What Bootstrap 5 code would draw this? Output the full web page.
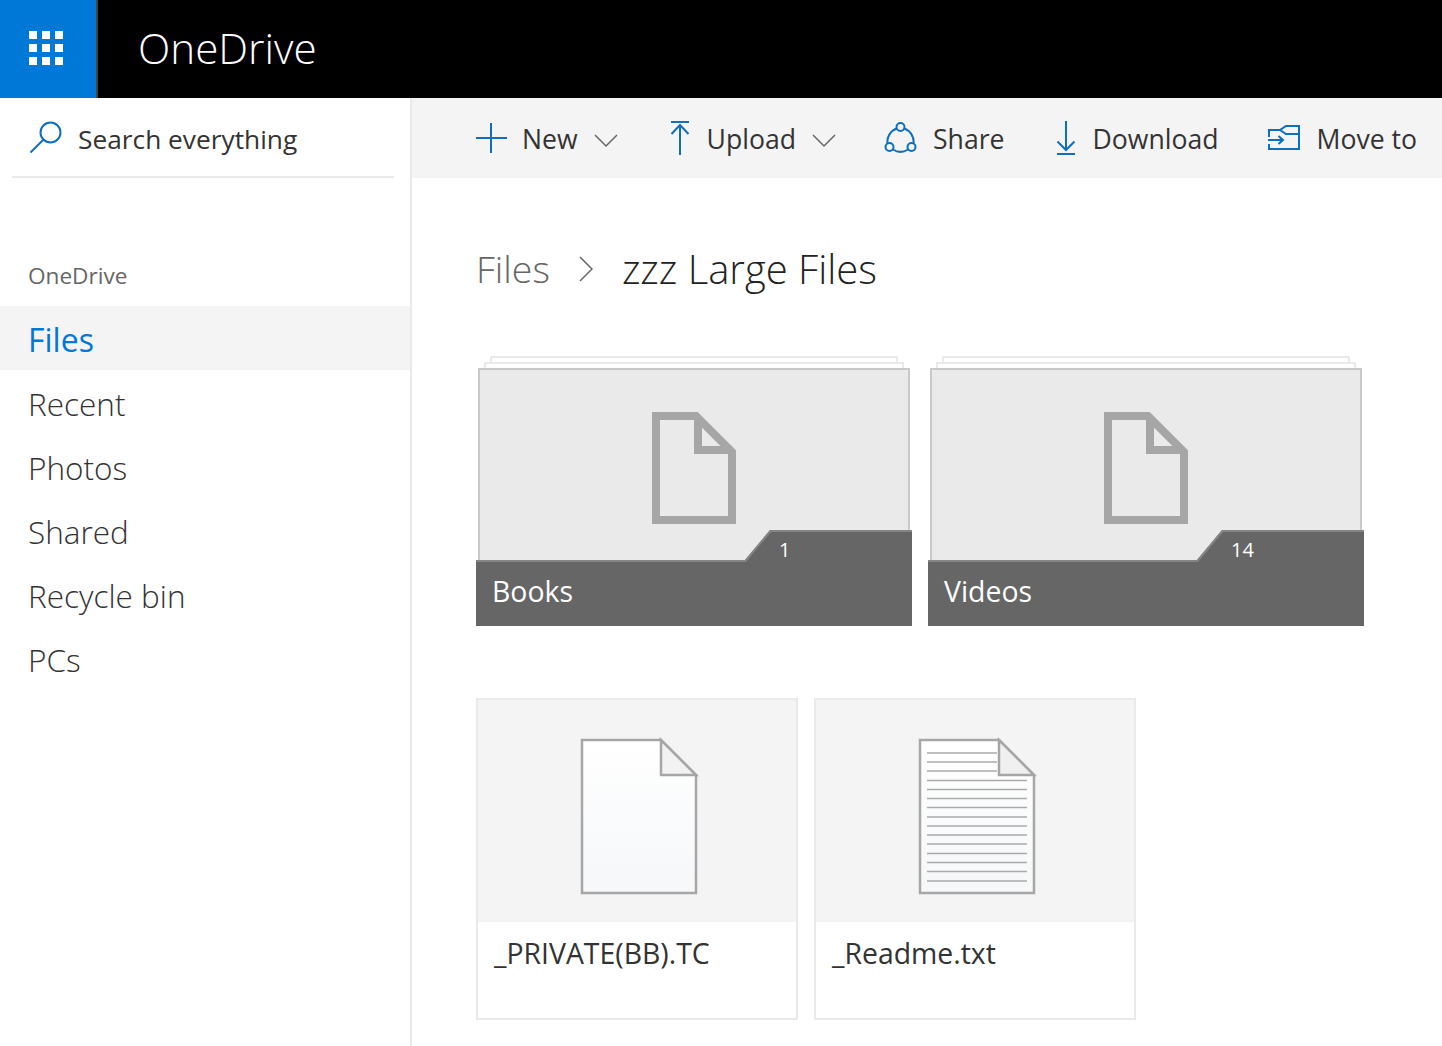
<!DOCTYPE html>
<html lang="en">
<head>
<meta charset="utf-8">
<title>OneDrive</title>
<link href="https://cdn.jsdelivr.net/npm/bootstrap@5.3.0/dist/css/bootstrap.min.css" rel="stylesheet">
<style>
html,body{height:100%;overflow:hidden}
body{font-family:"Open Sans","Liberation Sans",sans-serif;color:#333;background:#fff}
.od-shell{height:1046px;width:1442px}
.od-top{height:98px;background:#000}
.od-waffle{width:98px;height:98px;background:#0078d7;border-right:2px solid #444}
.od-waffle svg{margin:0 4px 2px 0}
.od-brand{font-size:42.2px;font-weight:300;color:#fff;margin-left:40px;line-height:96px}
.od-body{height:948px}
.od-side{width:412px;border-right:2px solid #eaeaea}
.od-search{margin:0 16px 0 12px;height:80px;border-bottom:2px solid #eaeaea;padding-left:17px;gap:15px;font-size:26.3px;color:#333}
.od-search span{margin-top:6px}
.od-label{font-size:22.6px;color:#666;margin:83px 0 15px 28px;line-height:30px}
.od-nav .nav-link{height:64px;padding:0 0 0 28px;font-size:31.5px;font-weight:300;color:#333;line-height:67px}
.od-nav .nav-link.active{background:#f4f4f4;color:#0078d7;font-weight:400;font-size:32px}
.od-tools{height:80px;background:#f4f4f4;padding-left:64px;gap:50px;font-size:26.6px;color:#333;white-space:nowrap;overflow:hidden}
.od-tool{gap:16px}
.od-tool svg{flex:none}
.od-tool span{margin-top:3px}
.od-first span{margin-left:-1px}
.od-chev{margin:6px 0 0 0}
.od-up span{margin-left:1px}
.od-share{margin-left:-2px}
.od-move{margin-left:-1px}
.od-crumb{margin:63px 0 0 64px;height:56px;line-height:56px;gap:29px;color:#666;font-weight:300;font-size:37.5px}
.od-crumb strong{font-weight:300;color:#222;font-size:40px}
.od-folders{margin:59px 0 0 64px;gap:16px}
.od-folder{width:436px;height:270px;position:relative}
.od-folder svg.od-art{position:absolute;left:0;top:0}
.od-fname{position:absolute;left:16px;top:217px;font-size:28.4px;color:#fff;line-height:36px}
.od-count{position:absolute;top:182px;font-size:20px;color:#fff;line-height:24px}
.od-files{margin:72px 0 0 64px;gap:16px}
.od-file{width:322px;height:322px;border:2px solid #eaeaea;background:#fff}
.od-prev{height:222px;background:#f4f4f4;margin:0}
.od-fn{font-size:28.4px;line-height:36px;padding:13px 0 0 16px;color:#333}
</style>
</head>
<body>
<div class="od-shell d-flex flex-column">
  <header class="od-top d-flex align-items-start">
    <div class="od-waffle d-flex align-items-center justify-content-center">
      <svg width="36" height="36" viewBox="0 0 36 36" fill="#fff"><rect x="1" y="1" width="8" height="8"/><rect x="14" y="1" width="8" height="8"/><rect x="27" y="1" width="8" height="8"/><rect x="1" y="14" width="8" height="8"/><rect x="14" y="14" width="8" height="8"/><rect x="27" y="14" width="8" height="8"/><rect x="1" y="27" width="8" height="8"/><rect x="14" y="27" width="8" height="8"/><rect x="27" y="27" width="8" height="8"/></svg>
    </div>
    <div class="od-brand">OneDrive</div>
  </header>
  <div class="od-body d-flex">
    <aside class="od-side flex-shrink-0">
      <div class="od-search d-flex align-items-center">
        <svg width="34" height="34" viewBox="0 0 34 34" fill="none" stroke="#106ebe" stroke-width="2"><circle cx="21.500" cy="12.500" r="10"/><path d="M14.500 19.500 1.500 32.500"/></svg>
        <span>Search everything</span>
      </div>
      <div class="od-label">OneDrive</div>
      <nav class="nav flex-column od-nav">
        <a class="nav-link active" href="#">Files</a>
        <a class="nav-link" href="#">Recent</a>
        <a class="nav-link" href="#">Photos</a>
        <a class="nav-link" href="#">Shared</a>
        <a class="nav-link" href="#">Recycle bin</a>
        <a class="nav-link" href="#">PCs</a>
      </nav>
    </aside>
    <main class="flex-grow-1 overflow-hidden">
      <div class="od-tools d-flex align-items-center">
        <div class="od-tool od-first d-flex align-items-center">
          <svg width="31" height="30" viewBox="0 0 31 30" fill="none" stroke="#106ebe" stroke-width="2"><path d="M0 15H31M15 0V30"/></svg>
          <span>New</span>
          <svg class="od-chev" width="24" height="14" viewBox="0 0 24 14" fill="none" stroke="#666" stroke-width="1.500"><path d="M1 1 12 12 23 1"/></svg>
        </div>
        <div class="od-tool od-up d-flex align-items-center">
          <svg width="22" height="34" viewBox="0 0 22 34" fill="none" stroke="#106ebe" stroke-width="2"><path d="M3 1H21M12 34V4M3.500 13 12 4 20.500 13"/></svg>
          <span>Upload</span>
          <svg class="od-chev" width="24" height="14" viewBox="0 0 24 14" fill="none" stroke="#666" stroke-width="1.500"><path d="M1 1 12 12 23 1"/></svg>
        </div>
        <div class="od-tool d-flex align-items-center">
          <svg class="od-share" width="33" height="34" viewBox="0 0 33 34" fill="none" stroke="#106ebe" stroke-width="2"><circle cx="16.500" cy="6" r="4"/><circle cx="5.500" cy="26" r="4"/><circle cx="27.500" cy="26" r="4"/><path d="M3.500 22.500A14 14 0 0 1 12.800 7.500M29.500 22.500A14 14 0 0 0 20.200 7.500M9 28.500A14 14 0 0 0 24 28.500"/></svg>
          <span>Share</span>
        </div>
        <div class="od-tool d-flex align-items-center">
          <svg width="22" height="34" viewBox="0 0 22 34" fill="none" stroke="#106ebe" stroke-width="2"><path d="M3 33H21M12 0V29M3.500 20.500 12 29 20.500 20.500"/></svg>
          <span>Download</span>
        </div>
        <div class="od-tool d-flex align-items-center">
          <svg class="od-move" width="33" height="25" viewBox="0 0 33 25" fill="none" stroke="#106ebe" stroke-width="2"><path d="M2 12V5H13L19 1H32V24H2V19M19 1 13 5 19 9H32M1 15H16M11.500 11 16 15 11.500 19"/></svg>
          <span>Move to</span>
        </div>
      </div>
      <div class="od-crumb d-flex align-items-center">
        <span>Files</span>
        <svg width="14" height="26" viewBox="0 0 14 26" fill="none" stroke="#666" stroke-width="1.500"><path d="M1 1 13 13 1 25"/></svg>
        <strong>zzz Large Files</strong>
      </div>
      <div class="od-folders d-flex">
        <div class="od-folder">
          <svg class="od-art" width="436" height="270" viewBox="0 0 436 270">
            <rect x="15" y="1" width="406" height="20" fill="#fff" stroke="#eaeaea" stroke-width="2"/>
            <rect x="9" y="7" width="418" height="20" fill="#fff" stroke="#eaeaea" stroke-width="2"/>
            <rect x="3" y="13" width="430" height="230" fill="#eaeaea" stroke="#c8c8c8" stroke-width="2"/>
            <path d="M180 60H220L256 96V164H180Z" fill="none" stroke="#a6a6a6" stroke-width="8"/>
            <path d="M222 60V94H256" fill="none" stroke="#a6a6a6" stroke-width="8"/>
            <path d="M0 204H269L294 174H436V270H0Z" fill="#666"/>
            <path d="M0 205H269.500L294.500 175H436" fill="none" stroke="#858585" stroke-width="2"/>
          </svg>
          <div class="od-count" style="left:303px">1</div>
          <div class="od-fname">Books</div>
        </div>
        <div class="od-folder">
          <svg class="od-art" width="436" height="270" viewBox="0 0 436 270">
            <rect x="15" y="1" width="406" height="20" fill="#fff" stroke="#eaeaea" stroke-width="2"/>
            <rect x="9" y="7" width="418" height="20" fill="#fff" stroke="#eaeaea" stroke-width="2"/>
            <rect x="3" y="13" width="430" height="230" fill="#eaeaea" stroke="#c8c8c8" stroke-width="2"/>
            <path d="M180 60H220L256 96V164H180Z" fill="none" stroke="#a6a6a6" stroke-width="8"/>
            <path d="M222 60V94H256" fill="none" stroke="#a6a6a6" stroke-width="8"/>
            <path d="M0 204H269L294 174H436V270H0Z" fill="#666"/>
            <path d="M0 205H269.500L294.500 175H436" fill="none" stroke="#858585" stroke-width="2"/>
          </svg>
          <div class="od-count" style="left:303px">14</div>
          <div class="od-fname">Videos</div>
        </div>
      </div>
      <div class="od-files d-flex">
        <div class="od-file">
          <div class="od-prev">
            <svg width="318" height="222" viewBox="0 0 318 222" class="d-block">
              <defs><linearGradient id="odpage" x1="0" y1="0" x2="0" y2="1"><stop offset="0" stop-color="#fff"/><stop offset="1" stop-color="#f5f7f9"/></linearGradient></defs>
              <path d="M104 40H183L218 75V193H104Z" fill="url(#odpage)" stroke="#a6a6a6" stroke-width="2.500"/>
              <path d="M183 40V75H218Z" fill="#f2f2f2" stroke="#a6a6a6" stroke-width="2.500"/>
            </svg>
          </div>
          <div class="od-fn">_PRIVATE(BB).TC</div>
        </div>
        <div class="od-file">
          <div class="od-prev">
            <svg width="318" height="222" viewBox="0 0 318 222" class="d-block">
              <path d="M104 40H183L218 75V193H104Z" fill="url(#odpage)" stroke="#a6a6a6" stroke-width="2.500"/>
              <path d="M111 53H181M111 62H181M111 71H181M111 80.500H211M111 89.500H211M111 98.500H211M111 107.500H211M111 117H211M111 126H211M111 135H211M111 144H211M111 153.500H211M111 162.500H211M111 171.500H211M111 181H211" stroke="#aaa" stroke-width="1.500"/>
              <path d="M183 40V75H218Z" fill="#f0f0f0" stroke="#a6a6a6" stroke-width="2.500"/>
            </svg>
          </div>
          <div class="od-fn">_Readme.txt</div>
        </div>
      </div>
    </main>
  </div>
</div>
<script src="https://cdn.jsdelivr.net/npm/bootstrap@5.3.0/dist/js/bootstrap.bundle.min.js"></script>
</body>
</html>
